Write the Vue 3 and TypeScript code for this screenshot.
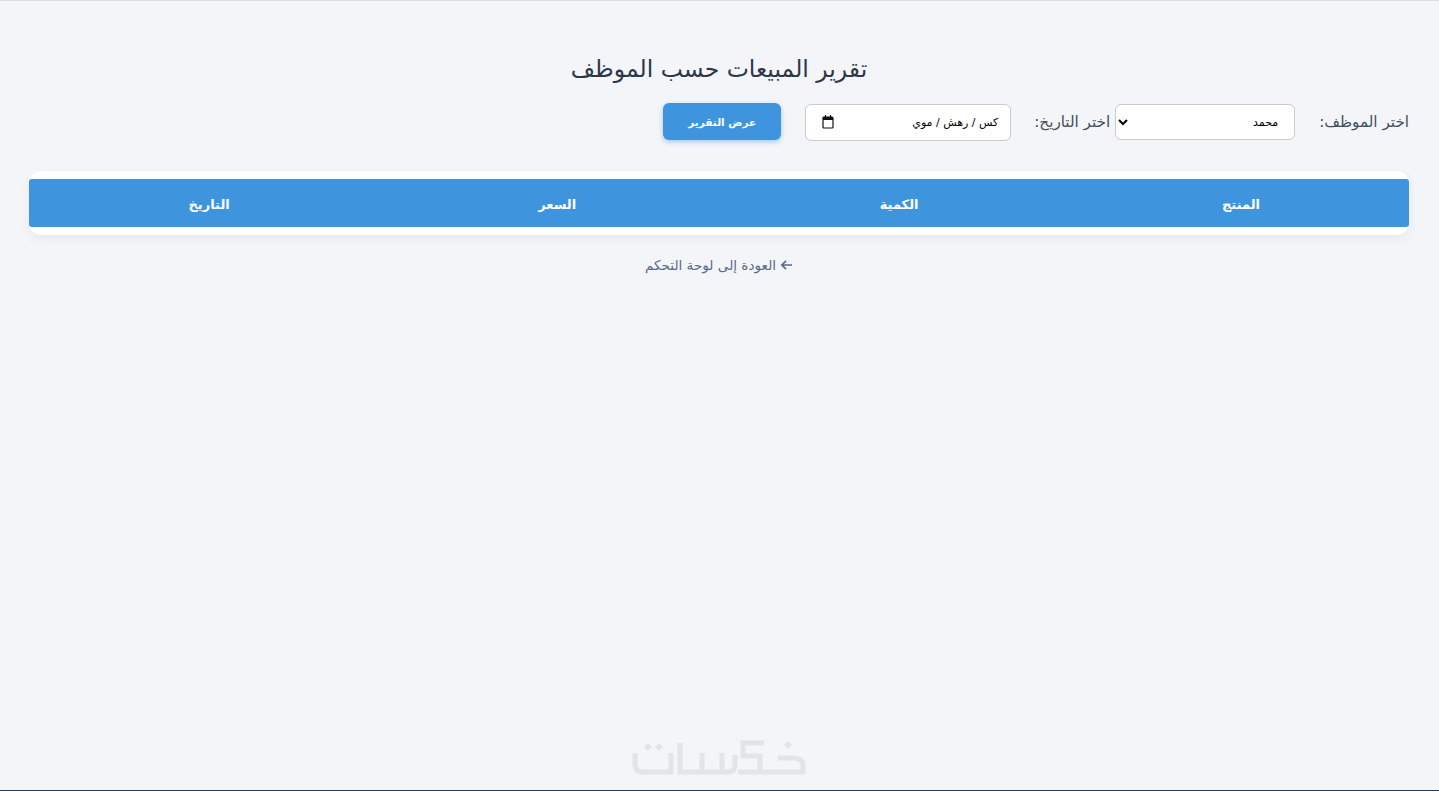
<template>
  <div class="page" dir="rtl" lang="ar">
    <main class="container">
      <h1 class="title">تقرير المبيعات حسب الموظف</h1>

      <form class="filters" @submit.prevent>
        <label class="filter-label" for="employee">اختر الموظف:</label>
        <select id="employee" v-model="employee" class="employee-select">
          <option v-for="name in employees" :key="name" :value="name">{{ name }}</option>
        </select>
        <label class="filter-label date-label" for="date">اختر التاريخ:</label>
        <div id="date" class="date-input">
          <span class="date-text">{{ datePlaceholder }}</span>
          <svg class="date-icon" viewBox="0 0 12 14" aria-hidden="true">
            <path d="M3.5 0v2M8.5 0v2" />
            <rect x="1" y="2" width="10" height="11" rx="1" />
            <path class="date-head" d="M1 2h10v3H1z" />
          </svg>
        </div>
        <button class="submit" type="submit">عرض التقرير</button>
      </form>

      <div class="table-card">
        <table class="report">
          <thead>
            <tr>
              <th v-for="col in columns" :key="col">{{ col }}</th>
            </tr>
          </thead>
        </table>
      </div>

      <a class="back" href="#" @click.prevent>
        <svg class="back-icon" viewBox="0 0 14 12" aria-hidden="true">
          <path d="M13 6H2M6.5 1.5 2 6l4.5 4.5" />
        </svg>
        العودة إلى لوحة التحكم
      </a>
    </main>

    <svg class="watermark" viewBox="0 0 178 44" role="img" aria-label="خمسات">
      <path d="M5 15V26Q5 34 13 34H41V15M50 5V34H72V15M72 34H92V15M92 34H98Q105 34 105 26V17" />
      <path d="M134 5H113V18H130V34H108M130 34H173V28Q173 20 164 20H148" />
      <path class="dot" d="M18 5l4 4-4 4-4-4zM29 5l4 4-4 4-4-4zM158 3l4 4-4 4-4-4z" />
    </svg>
    <div class="bottom-strip"></div>
  </div>
</template>

<script setup lang="ts">
import { ref } from 'vue';

const employees: string[] = ['محمد'];
const employee = ref<string>('محمد');
const datePlaceholder = 'كس / رهش / موي';
const columns: string[] = ['المنتج', 'الكمية', 'السعر', 'التاريخ'];
</script>

<style>
html,
body {
  margin: 0;
  background: #f4f5f8;
}
</style>

<style scoped>
.page {
  position: relative;
  height: 791px;
  overflow: hidden;
  box-sizing: border-box;
  border-top: 1px solid #dcdee2;
  background: #f4f5f8;
  font-family: "DejaVu Sans", "Noto Sans", sans-serif;
  color: #2d3748;
}

.container {
  padding: 52px 30px 0 29px;
}

.title {
  margin: 0;
  font-size: 23.5px;
  line-height: 32px;
  font-weight: 500;
  text-align: center;
  color: #2d3748;
}

.filters {
  display: flex;
  align-items: center;
  height: 38px;
  margin-top: 18px;
}

.filter-label {
  margin-left: 24px;
  font-size: 15.2px;
  color: #434e60;
}

.date-label {
  margin-left: 23px;
}

.employee-select {
  box-sizing: border-box;
  width: 180px;
  height: 36px;
  margin-left: 5px;
  padding: 0 12px;
  border: 1px solid #cbcbcb;
  border-radius: 6px;
  background: #fff;
  font-family: inherit;
  font-size: 11px;
  color: #000;
}

.date-input {
  display: flex;
  align-items: center;
  justify-content: space-between;
  box-sizing: border-box;
  width: 206px;
  height: 37px;
  margin-left: 24px;
  padding: 0 12px 0 13px;
  border: 1px solid #cbcbcb;
  border-radius: 6px;
  background: #fff;
  font-size: 11px;
  color: #000;
}

.date-icon {
  width: 12px;
  height: 14px;
  margin-left: 3px;
  fill: none;
  stroke: #111;
  stroke-width: 1.2;
}

.date-head {
  fill: #111;
  stroke: none;
}

.submit {
  align-self: flex-start;
  box-sizing: border-box;
  width: 118px;
  height: 37px;
  border: 0;
  border-radius: 6px;
  background: #3f95dd;
  box-shadow: 0 2px 5px rgba(63, 149, 221, 0.45);
  font-family: inherit;
  font-size: 10.5px;
  font-weight: 700;
  color: #fff;
}

.table-card {
  margin-top: 30px;
  padding: 8px 0;
  border-radius: 12px;
  background: #fff;
  box-shadow: 0 4px 12px rgba(0, 0, 0, 0.05);
}

.report {
  width: 100%;
  border-collapse: separate;
  border-spacing: 0;
  table-layout: fixed;
}

.report th {
  box-sizing: border-box;
  height: 48px;
  padding: 2px 0 0;
  background: #3f95dd;
  font-size: 13px;
  font-weight: 700;
  color: #fff;
}

.report th:nth-child(1),
.report th:nth-child(3) {
  width: 24.35%;
}

.report th:nth-child(2) {
  width: 25.2%;
}

.report th:first-child {
  border-radius: 0 3px 3px 0;
}

.report th:last-child {
  border-radius: 3px 0 0 3px;
}

.back {
  display: flex;
  align-items: center;
  justify-content: center;
  gap: 4px;
  margin-top: 20px;
  font-size: 13.6px;
  line-height: 20px;
  color: #5a6a8a;
  text-decoration: none;
}

.back-icon {
  width: 13px;
  height: 12px;
  fill: none;
  stroke: #5a6a8a;
  stroke-width: 1.8;
}

.watermark {
  position: absolute;
  left: 630px;
  top: 737px;
  width: 178px;
  height: 44px;
  fill: none;
  stroke: #e2e4e7;
  stroke-width: 5;
}

.watermark .dot {
  fill: #e2e4e7;
  stroke: none;
}

.bottom-strip {
  position: absolute;
  left: 0;
  right: 0;
  bottom: 0;
  height: 1px;
  background: #2a3a5e;
}
</style>
